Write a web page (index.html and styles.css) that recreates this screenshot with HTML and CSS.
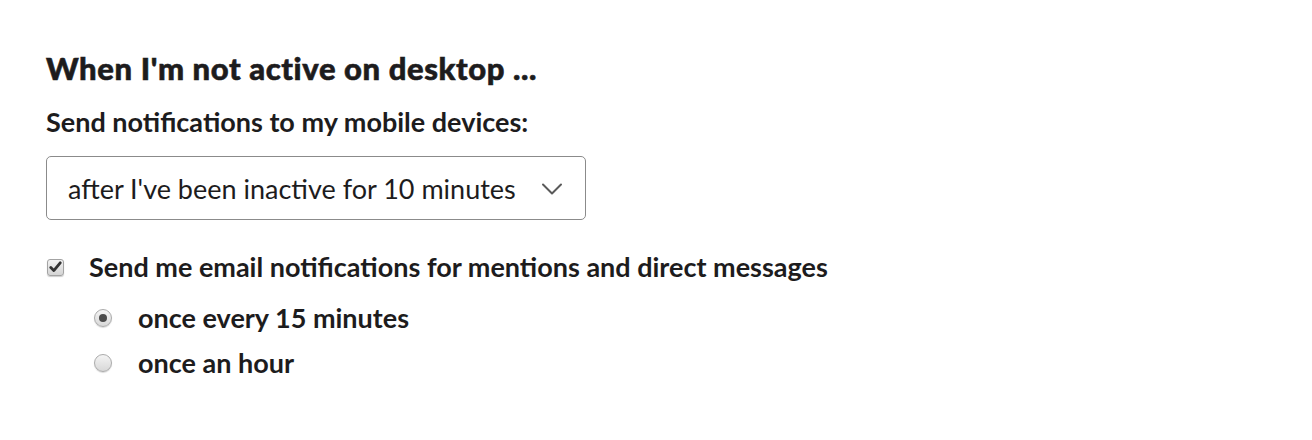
FILE: index.html
```html
<!DOCTYPE html>
<html lang="en">
<head>
  <meta charset="UTF-8">
  <title>Notifications</title>
  <link rel="stylesheet" href="styles.css">
</head>
<body>
  <div class="section">
    <h2 class="header">When I'm not active on desktop ...</h2>
    <label class="field-label" for="mobile-delay">Send notifications to my mobile devices:</label>
    <div class="select">
      <span class="select-value" id="mobile-delay">after I've been inactive for 10 minutes</span>
      <svg class="chevron" width="22" height="12" viewBox="0 0 22 12">
        <path d="M2 1.5 L11 10.5 L20 1.5" fill="none" stroke="#5a5a5a" stroke-width="2" stroke-linecap="round" stroke-linejoin="round"/>
      </svg>
    </div>

    <label class="check-row">
      <span class="checkbox">
        <svg width="13" height="12" viewBox="0 0 13 12">
          <path d="M1.8 6.5 L4.8 9.6 L11.2 1.8" fill="none" stroke="#333" stroke-width="2.8" stroke-linecap="round" stroke-linejoin="round"/>
        </svg>
      </span>
      Send me email notifications for mentions and direct messages
    </label>

    <div class="radio-group">
      <label class="radio-row">
        <span class="radio checked"></span>
        once every 15 minutes
      </label>
      <label class="radio-row">
        <span class="radio"></span>
        once an hour
      </label>
    </div>
  </div>
</body>
</html>
```

FILE: styles.css
```css
/***----BASIC----***/
body {
  font-family: 'Lato', 'Liberation Sans', sans-serif;
  background: #fff;
  color: #1d1c1d;
  margin: 0;
}
.section {
  padding: 48px 0 0 46px;
}

/***----Title Style----***/
.header {
  margin: 0;
  font-size: 31px;
  font-weight: 900;
  letter-spacing: 0.6px;
  -webkit-text-stroke: 0.6px #1d1c1d;
  line-height: 40px;
}
.field-label {
  display: block;
  margin-top: 18px;
  font-size: 27px;
  font-weight: 700;
  line-height: 32px;
}

/***----Select Style----***/
.select {
  margin-top: 18px;
  width: 540px;
  height: 64px;
  border: 1.5px solid #8b8b8b;
  border-radius: 5px;
  display: flex;
  align-items: center;
  justify-content: space-between;
  padding: 0 22px 0 21px;
  box-sizing: border-box;
}
.select-value {
  font-size: 27px;
}
.chevron {
  margin-top: 1px;
}

/***----Options Style----***/
.check-row {
  display: flex;
  align-items: center;
  gap: 25px;
  margin-top: 31px;
  font-size: 27px;
  font-weight: 700;
  line-height: 32px;
}
.checkbox {
  width: 17px;
  height: 17px;
  border: 1px solid #a3a3a3;
  border-radius: 3px;
  background: linear-gradient(#f2f2f2, #d4d4d4);
  box-shadow: 0 1px 1px rgba(0, 0, 0, 0.2);
  box-sizing: border-box;
  display: flex;
  align-items: center;
  justify-content: center;
  margin-left: 1px;
}
.radio-group {
  margin-top: 19px;
  padding-left: 48px;
  display: flex;
  flex-direction: column;
  gap: 13px;
}
.radio-row {
  display: flex;
  align-items: center;
  gap: 26px;
  font-size: 27px;
  font-weight: 700;
  line-height: 32px;
}
.radio {
  width: 18px;
  height: 18px;
  border: 1px solid #ababab;
  border-radius: 50%;
  background: linear-gradient(#f4f4f4, #d8d8d8);
  box-shadow: 0 1px 1px rgba(0, 0, 0, 0.15);
  box-sizing: border-box;
  display: flex;
  align-items: center;
  justify-content: center;
}
.radio.checked::after {
  content: "";
  width: 8px;
  height: 8px;
  border-radius: 50%;
  background: #4a4a4a;
}
```
